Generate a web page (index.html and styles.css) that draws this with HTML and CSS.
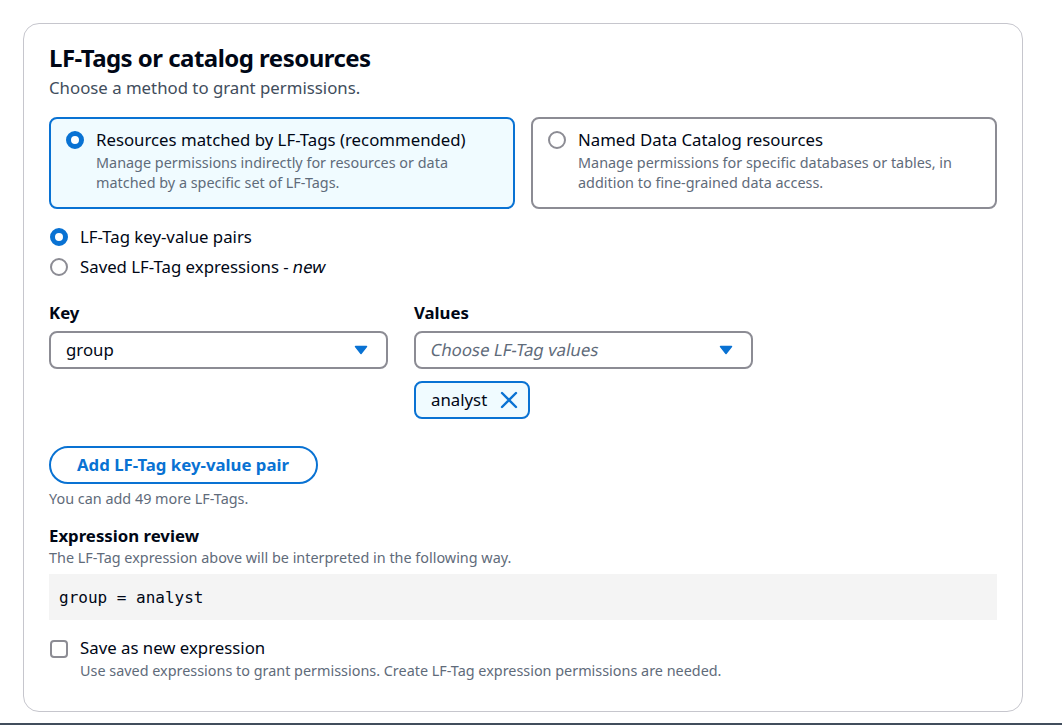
FILE: index.html
```html
<!DOCTYPE html>
<html lang="en">
<head>
<meta charset="utf-8">
<title>LF-Tags or catalog resources</title>
<link rel="stylesheet" href="styles.css">
</head>
<body>
<div class="page">
  <section class="card">
    <h2 class="title">LF-Tags or catalog resources</h2>
    <p class="subtitle">Choose a method to grant permissions.</p>

    <div class="tiles">
      <div class="tile tile-selected">
        <span class="radio radio-checked"></span>
        <div class="tile-text">
          <div class="tile-title">Resources matched by LF-Tags (recommended)</div>
          <div class="tile-desc">Manage permissions indirectly for resources or data matched by a specific set of LF-Tags.</div>
        </div>
      </div>
      <div class="tile">
        <span class="radio"></span>
        <div class="tile-text">
          <div class="tile-title">Named Data Catalog resources</div>
          <div class="tile-desc">Manage permissions for specific databases or tables, in addition to fine-grained data access.</div>
        </div>
      </div>
    </div>

    <div class="radio-group">
      <div class="radio-row"><span class="radio radio-checked"></span><span class="radio-label">LF-Tag key-value pairs</span></div>
      <div class="radio-row"><span class="radio"></span><span class="radio-label">Saved LF-Tag expressions - <em class="slant">new</em></span></div>
    </div>

    <div class="fields">
      <div class="field">
        <div class="label">Key</div>
        <div class="select">
          <span class="select-value">group</span>
          <svg class="caret" width="14" height="10" viewBox="0 0 14 10"><path d="M1.5 1.5 H12.5 L7 8.5 Z" fill="#0972d3" stroke="#0972d3" stroke-width="1.5" stroke-linejoin="round"/></svg>
        </div>
      </div>
      <div class="field">
        <div class="label">Values</div>
        <div class="select">
          <span class="select-placeholder slant">Choose LF-Tag values</span>
          <svg class="caret" width="14" height="10" viewBox="0 0 14 10"><path d="M1.5 1.5 H12.5 L7 8.5 Z" fill="#0972d3" stroke="#0972d3" stroke-width="1.5" stroke-linejoin="round"/></svg>
        </div>
        <div class="token">
          <span>analyst</span>
          <svg class="token-x" width="18" height="18" viewBox="0 0 18 18"><path d="M2 2 L16 16 M16 2 L2 16" stroke="#0972d3" stroke-width="2.4" stroke-linecap="round" fill="none"/></svg>
        </div>
      </div>
    </div>

    <button class="btn" type="button">Add LF-Tag key-value pair</button>
    <p class="hint">You can add 49 more LF-Tags.</p>

    <div class="review">
      <div class="label">Expression review</div>
      <div class="desc">The LF-Tag expression above will be interpreted in the following way.</div>
      <pre class="code">group = analyst</pre>
    </div>

    <div class="check-row">
      <span class="checkbox"></span>
      <div class="check-text">
        <div class="check-label">Save as new expression</div>
        <div class="desc">Use saved expressions to grant permissions. Create LF-Tag expression permissions are needed.</div>
      </div>
    </div>
  </section>
  <div class="footer-line"></div>
</div>
</body>
</html>
```
FILE: styles.css
```css
* { box-sizing: border-box; }
html, body { margin: 0; padding: 0; background: #ffffff; }
body {
  font-family: "Noto Sans", "Open Sans", Arial, sans-serif;
  color: #000716;
  font-size: 16.8px;
  line-height: 22px;
  overflow: hidden;
}
.page { padding: 23px 0 0 23px; }
.card {
  width: 1000px;
  border: 1px solid #c6c6cd;
  border-radius: 16px;
  padding: 19px 25px 30px 25px;
}
.title {
  margin: 0;
  font-size: 24px;
  line-height: 30px;
  font-weight: 700;
  letter-spacing: -0.022em;
}
.subtitle {
  margin: 4px 0 0;
  color: #414d5c;
}
.tiles {
  margin-top: 18px;
  display: grid;
  grid-template-columns: 1fr 1fr;
  column-gap: 16px;
}
.tile {
  display: flex;
  align-items: flex-start;
  gap: 12px;
  border: 2px solid #8c8c94;
  border-radius: 8px;
  padding: 10px 14px 12px 15px;
  height: 92px;
}
.tile-selected {
  border-color: #0972d3;
  background: #f0fbff;
}
.radio {
  flex: none;
  width: 18px;
  height: 18px;
  border-radius: 50%;
  border: 2px solid #8c8c94;
  margin-top: 2px;
  background: #fff;
}
.radio-checked {
  border: 5.5px solid #0972d3;
}
.tile-desc {
  margin-top: 2px;
  font-size: 14.4px;
  line-height: 20px;
  color: #5f6b7a;
}
.radio-group {
  margin-top: 17px;
  display: flex;
  flex-direction: column;
  gap: 8px;
}
.radio-row {
  display: flex;
  align-items: flex-start;
  gap: 12px;
  padding-left: 1px;
}
.slant {
  display: inline-block;
  font-style: normal;
  transform: skewX(-11deg);
}
.fields {
  margin-top: 24px;
  display: grid;
  grid-template-columns: 339px 339px;
  column-gap: 26px;
}
.label {
  font-weight: 700;
}
.select {
  margin-top: 7px;
  height: 38px;
  border: 2px solid #8c8c94;
  border-radius: 8px;
  padding: 0 18px 0 15px;
  display: flex;
  align-items: center;
  justify-content: space-between;
}
.select-placeholder {
  color: #5f6b7a;
}
.token {
  margin-top: 12px;
  display: inline-flex;
  align-items: center;
  gap: 13px;
  height: 38px;
  border: 2px solid #0972d3;
  border-radius: 8px;
  background: #f0fbff;
  padding: 0 10px 0 15px;
}
.token-x { display: block; }
.btn {
  margin-top: 27px;
  display: block;
  height: 38px;
  padding: 0 27px 0 26px;
  border: 2px solid #0972d3;
  border-radius: 20px;
  background: #fff;
  color: #0972d3;
  font-family: inherit;
  font-size: 16.8px;
  line-height: 22px;
  font-weight: 700;
}
.hint {
  margin: 5px 0 0;
  font-size: 14.4px;
  line-height: 20px;
  color: #5f6b7a;
}
.review { margin-top: 16px; }
.desc {
  margin-top: 1px;
  font-size: 14.4px;
  line-height: 20px;
  color: #5f6b7a;
}
.code {
  margin: 6px 0 0;
  background: #f4f4f4;
  padding: 13px 10px 11px;
  font-family: "DejaVu Sans Mono", "Liberation Mono", monospace;
  font-size: 16px;
  line-height: 22px;
  color: #000716;
}
.check-row {
  margin-top: 17px;
  display: flex;
  align-items: flex-start;
  gap: 12px;
  padding-left: 1px;
}
.checkbox {
  flex: none;
  width: 18px;
  height: 18px;
  border: 2px solid #8c8c94;
  border-radius: 4px;
  margin-top: 3px;
}
.check-text .desc { margin-top: 2px; }
.footer-line {
  margin: 11px 0 0 -23px;
  height: 3px;
  background: #414d5c;
}
```
